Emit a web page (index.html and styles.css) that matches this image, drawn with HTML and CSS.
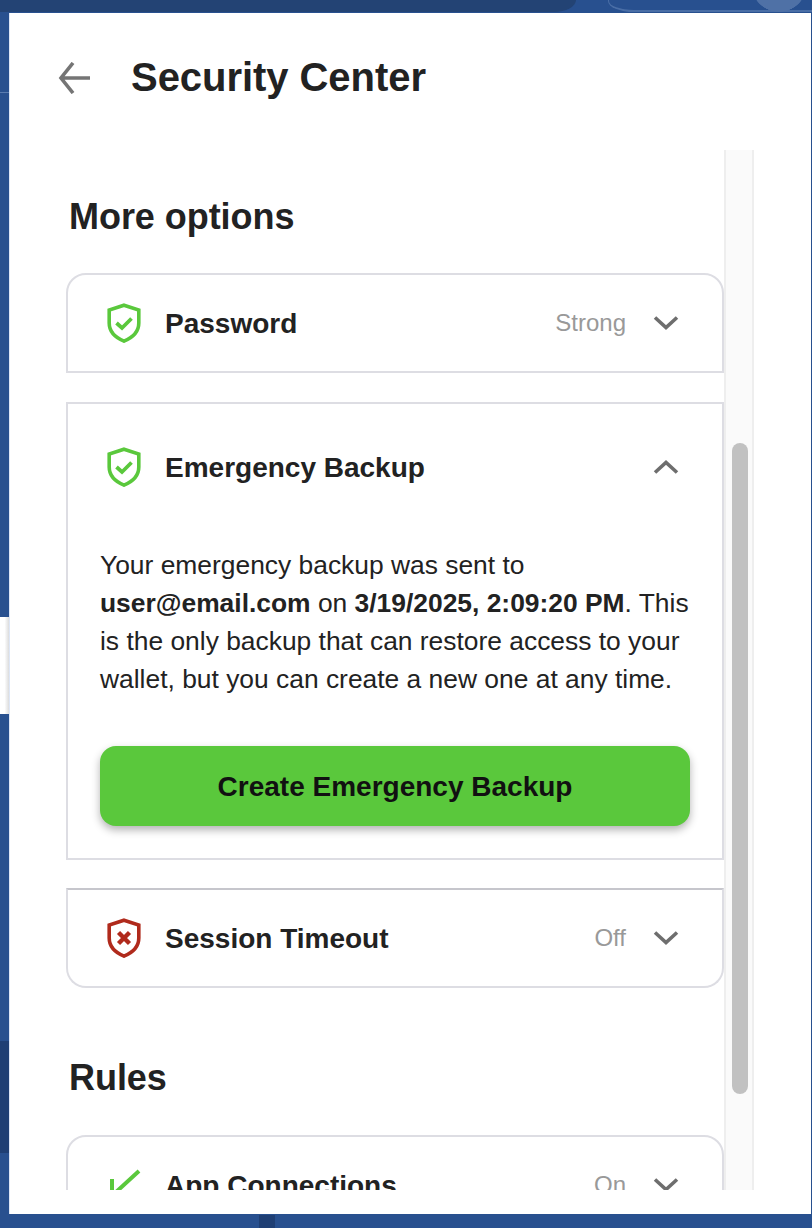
FILE: index.html
```html
<!DOCTYPE html>
<html lang="en">
<head>
<meta charset="utf-8">
<title>Security Center</title>
<link rel="stylesheet" href="styles.css">
</head>
<body>
<div class="bg-top"></div>
<div class="bg-outline"></div>
<div class="bg-circle"></div>
<div class="bg-line"></div>
<div class="bg-left-strip"></div>
<div class="bg-left-dark"></div>
<div class="bg-bottom-dark"></div>
<main class="panel">
  <header class="header">
    <svg class="back" viewBox="0 0 32 32" width="32" height="32"><path d="M32 16H3M15 1 3 16l12 15" fill="none" stroke="#757575" stroke-width="3.6"/></svg>
    <h1 class="title">Security Center</h1>
  </header>
  <div class="scroller">
    <div class="content">
      <h2 class="section">More options</h2>
      <section class="card card-top">
        <div class="row">
          <svg class="shield" viewBox="0 0 34 40" width="34" height="40"><path d="M17 2.200 31.800 7v13c0 8.500-6 14.500-14.800 18.200C8.200 34.500 2.200 28.500 2.200 20V7Z" fill="none" stroke="#5ac83c" stroke-width="3.600"/><path d="m9.500 20 5.500 5 9.500-9.500" fill="none" stroke="#5ac83c" stroke-width="3.800"/></svg>
          <span class="label">Password</span>
          <span class="status">Strong</span>
          <svg class="chev" viewBox="0 0 26 16" width="26" height="16"><path d="m2 2.500 11 10 11-10" fill="none" stroke="#6e6e6e" stroke-width="3.600"/></svg>
        </div>
      </section>
      <section class="card card-mid">
        <div class="row row-open">
          <svg class="shield" viewBox="0 0 34 40" width="34" height="40"><path d="M17 2.200 31.800 7v13c0 8.500-6 14.500-14.800 18.200C8.200 34.500 2.200 28.500 2.200 20V7Z" fill="none" stroke="#5ac83c" stroke-width="3.600"/><path d="m9.500 20 5.500 5 9.500-9.500" fill="none" stroke="#5ac83c" stroke-width="3.800"/></svg>
          <span class="label">Emergency Backup</span>
          <svg class="chev" viewBox="0 0 26 16" width="26" height="16"><path d="m2 13.500 11-10 11 10" fill="none" stroke="#6e6e6e" stroke-width="3.600"/></svg>
        </div>
        <div class="detail">
          <p class="copy">Your emergency backup was sent to <b>user@email.com</b> on <b>3/19/2025, 2:09:20 PM</b>. This is the only backup that can restore access to your wallet, but you can create a new one at any time.</p>
          <button class="cta" type="button">Create Emergency Backup</button>
        </div>
      </section>
      <section class="card card-bottom">
        <div class="row">
          <svg class="shield" viewBox="0 0 34 40" width="34" height="40"><path d="M17 2.200 31.800 7v13c0 8.500-6 14.500-14.800 18.200C8.200 34.500 2.200 28.500 2.200 20V7Z" fill="none" stroke="#b02a1c" stroke-width="3.600"/><path d="m11.500 14.500 11 11M22.500 14.500l-11 11" fill="none" stroke="#b02a1c" stroke-width="4.400"/></svg>
          <span class="label">Session Timeout</span>
          <span class="status">Off</span>
          <svg class="chev" viewBox="0 0 26 16" width="26" height="16"><path d="m2 2.500 11 10 11-10" fill="none" stroke="#6e6e6e" stroke-width="3.600"/></svg>
        </div>
      </section>
      <h2 class="section section-rules">Rules</h2>
      <section class="card card-top">
        <div class="row">
          <svg class="shield" viewBox="0 0 34 40" width="34" height="40"><path d="M5 14V40M8 28 32 6" fill="none" stroke="#5ac83c" stroke-width="4"/></svg>
          <span class="label">App Connections</span>
          <span class="status">On</span>
          <svg class="chev" viewBox="0 0 26 16" width="26" height="16"><path d="m2 2.500 11 10 11-10" fill="none" stroke="#6e6e6e" stroke-width="3.600"/></svg>
        </div>
      </section>
    </div>
    <div class="track"><div class="thumb"></div></div>
  </div>
</main>
</body>
</html>
```
FILE: styles.css
```css
* { box-sizing: border-box; }
html, body { margin: 0; height: 100%; }
body {
  position: relative;
  overflow: hidden;
  background: #28508f;
  padding: 13px 1px 13px 9px;
  font-family: "Liberation Sans", Arial, sans-serif;
  color: #222;
}
.bg-top { position: absolute; left: 0; top: 0; width: 576px; height: 12px; background: #234374; border-bottom-right-radius: 22px 12px; }
.bg-outline { position: absolute; left: 608px; top: 0; right: 0; height: 12px; border-left: 1px solid #4a6ea6; border-bottom: 2px solid #4a6ea6; border-bottom-left-radius: 26px 11px; }
.bg-circle { position: absolute; left: 751px; top: 0; width: 56px; height: 12px; background: radial-gradient(circle at 28px -16px, #4f71a6 27.500px, transparent 28px); }
.bg-line { position: absolute; left: 0; top: 92px; width: 9px; height: 1px; background: #5a7cb0; }
.bg-left-strip { position: absolute; left: 0; top: 617px; width: 9px; height: 97px; background: linear-gradient(90deg, #fff, #fff 50%, #dcdcdc); }
.bg-left-dark { position: absolute; left: 0; top: 1041px; width: 9px; height: 112px; background: #1f3f74; }
.bg-bottom-dark { position: absolute; left: 259px; top: 1215px; width: 16px; height: 13px; background: #1f3f74; }
.panel {
  position: relative;
  height: 1201px;
  background: #fff;
  box-shadow: inset 1px 0 0 #dde6f6;
  display: flex;
  flex-direction: column;
}
.header {
  display: flex;
  align-items: center;
  height: 137px;
  padding: 0 0 7px 49px;
  gap: 41px;
}
.back { flex: none; }
.title { margin: 0 0 2px; font-size: 40px; font-weight: 700; letter-spacing: -.05px; }
.scroller {
  display: flex;
  height: 1040px;
  overflow: hidden;
}
.content {
  width: 715px;
  padding: 0 0 0 57px;
  flex: none;
}
.section { margin: 45px 0 0 3px; height: 44px; line-height: 44px; font-size: 36px; font-weight: 700; letter-spacing: -.05px; }
.section-rules { margin-top: 68px; margin-bottom: 35px; }
.card { border: 2px solid #dddde3; background: #fff; }
.card-top { border-radius: 20px 20px 0 0; height: 100px; margin-top: 34px; }
.card-mid { margin-top: 29px; height: 458px; }
.card-bottom { border-radius: 0 0 20px 20px; height: 100px; margin-top: 28px; border-top-color: #c6c6cc; }
.section-rules + .card-top { margin-top: 0; }
.row { display: flex; align-items: center; height: 96px; padding: 0 43px 0 39px; }
.row-open { height: 126px; }
.shield { flex: none; margin-right: 24px; }
.label { font-size: 28px; font-weight: 700; flex: 1; padding-top: 2px; }
.status { color: #999; font-size: 24px; margin-right: 27px; }
.chev { flex: none; }
.detail { padding: 16px 31px 0 32px; }
.copy { margin: 0; font-size: 26.400px; line-height: 38px; color: #222; }
.cta {
  display: block;
  width: 590px;
  height: 80px;
  margin-top: 48px;
  padding: 2px 0 0;
  border: 0;
  border-radius: 16px;
  background: #5ac83c;
  color: #111;
  font: 700 28px "Liberation Sans", Arial, sans-serif;
  box-shadow: 0 4px 8px rgba(0,0,0,.3);
}
.track {
  position: relative;
  width: 30px;
  height: 100%;
  background: #fafafa;
  border-left: 2px solid #eee;
  border-right: 2px solid #eee;
  flex: none;
}
.thumb {
  position: absolute;
  left: 6px;
  top: 293px;
  width: 16px;
  height: 651px;
  border-radius: 8px;
  background: #c1c1c1;
}
```
